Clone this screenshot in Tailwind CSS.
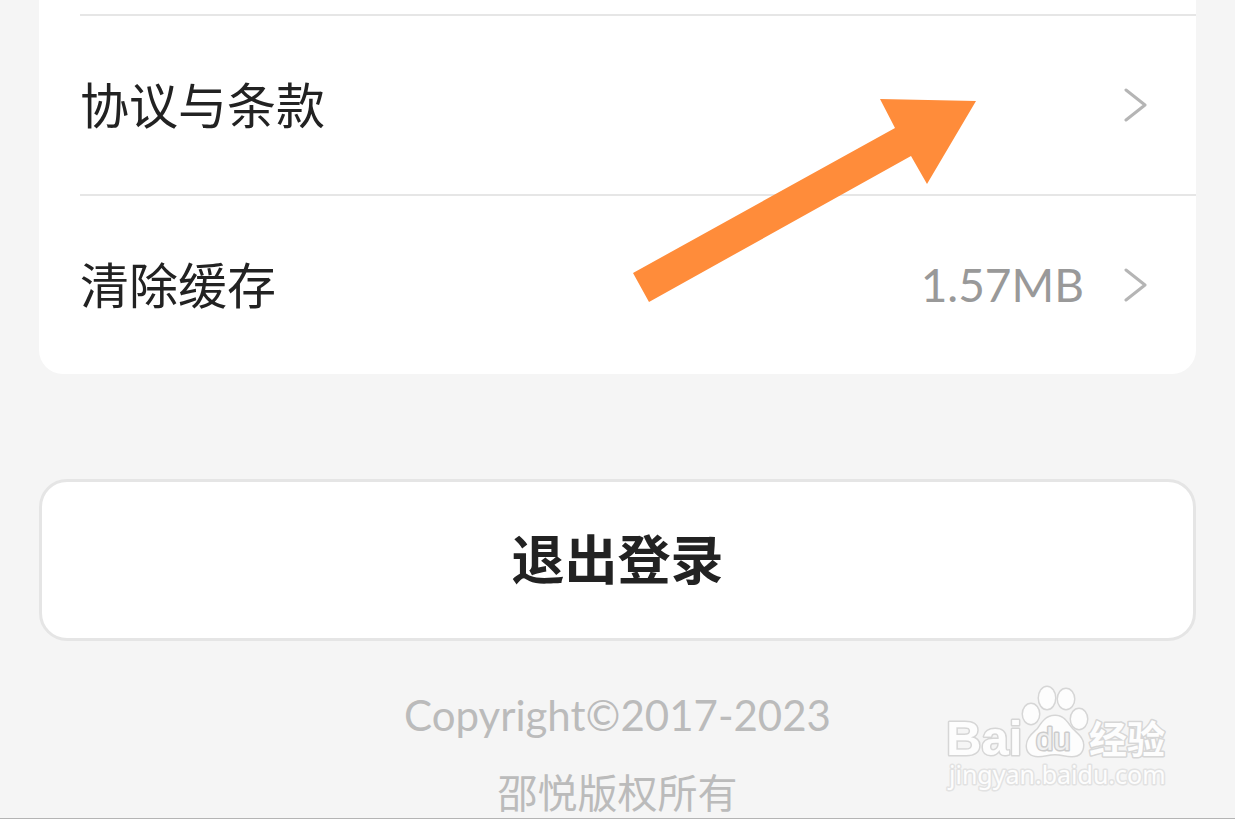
<!DOCTYPE html>
<html lang="zh-CN">

<head>
    <meta charset="UTF-8">
    <meta name="viewport" content="width=device-width, initial-scale=1.0">
    <title>设置</title>
    <script src="https://cdn.jsdelivr.net/npm/@tailwindcss/browser@4"></script>
</head>

<body class="relative min-h-screen overflow-hidden bg-[#f5f5f5] px-[39px] font-['Lato','Noto_Sans_CJK_SC',sans-serif] text-[#222222] border-b border-[#b4b4b4]">
    <!-- Settings list -->
    <nav class="rounded-b-3xl bg-white pt-3.5 pl-[41px]">
        <a href="#" class="flex h-[180px] items-center justify-between border-t-2 border-[#e6e6e6] pr-12">
            <span class="text-[49px] leading-[72px]">协议与条款</span>
            <svg class="h-9 w-6" viewBox="0 0 24 36" fill="none" stroke="#b5b5b5" stroke-width="3" stroke-linecap="round" stroke-linejoin="round">
                <path d="M2 3L21 18L2 33" />
            </svg>
        </a>
        <a href="#" class="flex h-[180px] items-center border-t-2 border-[#e6e6e6] pr-12">
            <span class="grow text-[49px] leading-[72px]">清除缓存</span>
            <span class="mr-10 text-[46px] leading-[72px] text-[#999999]">1.57MB</span>
            <svg class="h-9 w-6" viewBox="0 0 24 36" fill="none" stroke="#b5b5b5" stroke-width="3" stroke-linecap="round" stroke-linejoin="round">
                <path d="M2 3L21 18L2 33" />
            </svg>
        </a>
    </nav>

    <button type="button"
        class="mt-[105px] block h-[162px] w-full rounded-[28px] border-3 border-[#e5e5e5] bg-white text-[53px] leading-[80px] font-bold">
        退出登录
    </button>

    <footer class="mt-9 text-center text-[#bbbbbb]">
        <p class="text-[42px] leading-[76px]">Copyright©2017-2023</p>
        <p class="mt-4 text-[40px] leading-[48px]">邵悦版权所有</p>
    </footer>

    <!-- Arrow pointing at the first row -->
    <svg class="pointer-events-none absolute top-[98px] left-[633px] h-[205px] w-[344px]" viewBox="0 0 344 205" fill="#ff8c3a">
        <path d="M0 175L262 30L247 1L343 3L294 86L278 58L16 204Z" />
    </svg>

    <!-- Watermark -->
    <svg class="pointer-events-none absolute top-[680px] left-[940px] h-[120px] w-[240px]" viewBox="0 0 240 120"
        fill="#fdfdfd" stroke="#d6d6d6" stroke-width="3" stroke-linejoin="round" paint-order="stroke">
        <text x="6" y="75" font-family="Liberation Sans" font-weight="bold" font-size="49">Bai</text>
        <ellipse cx="91" cy="34" rx="8" ry="10" />
        <ellipse cx="107" cy="18" rx="8" ry="11" />
        <ellipse cx="126" cy="19" rx="8" ry="10" />
        <ellipse cx="139" cy="39" rx="8" ry="10" />
        <path d="M115 36C106 36 102 43 98 49C93 54 87 58 87 66C87 72 91 76 98 76C104 76 109 74 115 74C121 74 126 76 132 76C139 76 143 72 143 65C143 58 137 54 132 49C127 43 124 36 115 36Z" />
        <text x="96" y="70" font-family="Liberation Sans" font-size="31" fill="#f0f0f0" stroke="#cccccc">du</text>
        <text x="149" y="73" font-family="Noto Sans CJK SC" font-weight="bold" font-size="38">经验</text>
        <text x="9" y="104" font-family="Noto Sans" font-size="25" stroke="#e2e2e2">jingyan.baidu.com</text>
    </svg>
</body>

</html>
